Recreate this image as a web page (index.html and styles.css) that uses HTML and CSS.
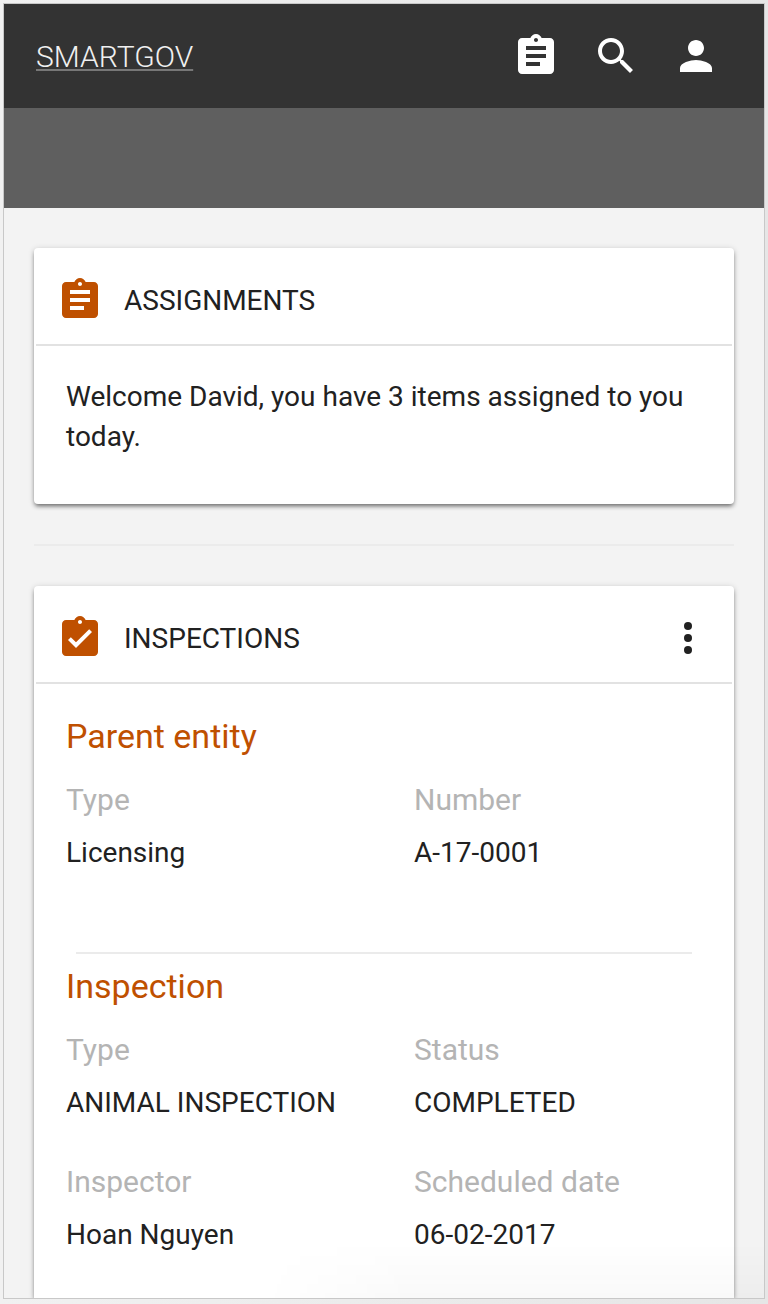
FILE: index.html
```html
<!DOCTYPE html>
<html lang="en">
<head>
<meta charset="utf-8">
<meta name="viewport" content="width=device-width, initial-scale=1">
<title>SmartGov</title>
<link rel="stylesheet" href="styles.css">
</head>
<body>
<div class="screen">
  <header class="topbar">
    <a class="brand" href="#">SMARTGOV</a>
    <nav class="actions" aria-label="Main">
      <button class="icon-button" type="button" aria-label="Assignments">
        <svg class="icon" viewBox="0 0 24 24"><path d="M19 3h-4.18C14.4 1.84 13.3 1 12 1c-1.3 0-2.4.84-2.82 2H5c-1.1 0-2 .9-2 2v14c0 1.1.9 2 2 2h14c1.1 0 2-.9 2-2V5c0-1.1-.9-2-2-2zm-7 0c.55 0 1 .45 1 1s-.45 1-1 1-1-.45-1-1 .45-1 1-1zm2 14H7v-2h7v2zm3-4H7v-2h10v2zm0-4H7V7h10v2z"/></svg>
      </button>
      <button class="icon-button" type="button" aria-label="Search">
        <svg class="icon" viewBox="0 0 24 24"><path d="M15.5 14h-.79l-.28-.27C15.41 12.59 16 11.11 16 9.5 16 5.91 13.09 3 9.5 3S3 5.91 3 9.5 5.91 16 9.5 16c1.61 0 3.09-.59 4.23-1.57l.27.28v.79l5 4.99L20.49 19l-4.99-5zm-6 0C7.01 14 5 11.99 5 9.5S7.01 5 9.5 5 14 7.01 14 9.5 11.99 14 9.5 14z"/></svg>
      </button>
      <button class="icon-button" type="button" aria-label="Account">
        <svg class="icon" viewBox="0 0 24 24"><path d="M12 12c2.21 0 4-1.79 4-4s-1.79-4-4-4-4 1.79-4 4 1.79 4 4 4zm0 2c-2.67 0-8 1.34-8 4v2h16v-2c0-2.66-5.33-4-8-4z"/></svg>
      </button>
    </nav>
  </header>
  <div class="band"></div>
  <main class="content">
    <section class="card">
      <header class="card-header">
        <svg class="icon accent" viewBox="0 0 24 24" aria-hidden="true"><path d="M19 3h-4.18C14.4 1.84 13.3 1 12 1c-1.3 0-2.4.84-2.82 2H5c-1.1 0-2 .9-2 2v14c0 1.1.9 2 2 2h14c1.1 0 2-.9 2-2V5c0-1.1-.9-2-2-2zm-7 0c.55 0 1 .45 1 1s-.45 1-1 1-1-.45-1-1 .45-1 1-1zm2 14H7v-2h7v2zm3-4H7v-2h10v2zm0-4H7V7h10v2z"/></svg>
        <h2 class="card-title">ASSIGNMENTS</h2>
      </header>
      <p class="message">Welcome David, you have 3 items assigned to you today.</p>
    </section>
    <hr class="divider">
    <section class="card card-open">
      <header class="card-header">
        <svg class="icon accent" viewBox="0 0 24 24" aria-hidden="true"><path d="M19 3h-4.18C14.4 1.84 13.3 1 12 1c-1.3 0-2.4.84-2.82 2H5c-1.1 0-2 .9-2 2v14c0 1.1.9 2 2 2h14c1.1 0 2-.9 2-2V5c0-1.1-.9-2-2-2zm-7 0c.55 0 1 .45 1 1s-.45 1-1 1-1-.45-1-1 .45-1 1-1zm-2 14l-4-4 1.41-1.41L10 14.17l6.59-6.59L18 9l-8 8z"/></svg>
        <h2 class="card-title">INSPECTIONS</h2>
        <button class="icon-button menu" type="button" aria-label="More options">
          <svg class="icon" viewBox="0 0 24 24"><circle cx="12" cy="6" r="2"/><circle cx="12" cy="12" r="2"/><circle cx="12" cy="18" r="2"/></svg>
        </button>
      </header>
      <div class="details">
        <h3 class="group-title">Parent entity</h3>
        <dl class="fields">
          <div class="field"><dt>Type</dt><dd>Licensing</dd></div>
          <div class="field"><dt>Number</dt><dd>A-17-0001</dd></div>
        </dl>
        <hr class="divider divider-inner">
        <h3 class="group-title">Inspection</h3>
        <dl class="fields">
          <div class="field"><dt>Type</dt><dd>ANIMAL INSPECTION</dd></div>
          <div class="field"><dt>Status</dt><dd>COMPLETED</dd></div>
          <div class="field"><dt>Inspector</dt><dd>Hoan Nguyen</dd></div>
          <div class="field"><dt>Scheduled date</dt><dd>06-02-2017</dd></div>
        </dl>
      </div>
    </section>
  </main>
</div>
</body>
</html>
```

FILE: styles.css
```css
* {
  box-sizing: border-box;
}

body {
  margin: 0;
  min-height: 100vh;
  padding: 3px 3px 5px;
  display: flex;
  flex-direction: column;
  background: linear-gradient(to right, #f1f1f1, #e6e6e6);
  color: #212121;
  font-family: Roboto, "Liberation Sans", sans-serif;
  font-size: 28px;
  line-height: 40px;
}

.screen {
  position: relative;
  flex: 1;
  display: flex;
  flex-direction: column;
  border: 1px solid #c8c8c8;
  background: #f3f3f3;
  overflow: hidden;
}

/* soft shade along the lower edge */
.screen::after {
  content: "";
  position: absolute;
  right: 0;
  bottom: 0;
  width: 66%;
  height: 56px;
  background: linear-gradient(to bottom, rgba(0, 0, 0, 0), rgba(0, 0, 0, 0.025));
  -webkit-mask-image: linear-gradient(to right, transparent, #000 30%);
  mask-image: linear-gradient(to right, transparent, #000 30%);
  pointer-events: none;
}

.topbar {
  display: flex;
  align-items: center;
  justify-content: space-between;
  height: 104px;
  padding: 0 44px 0 32px;
  background: #333;
}

.brand {
  padding-top: 2px;
  color: #f0f0f0;
  font-size: 30px;
  font-weight: 300;
  text-decoration: underline;
  text-decoration-color: #777;
  text-decoration-thickness: 2px;
  text-underline-offset: 2px;
}

.actions {
  display: flex;
  gap: 32px;
}

.icon-button {
  display: block;
  padding: 0;
  border: 0;
  background: none;
  color: #fff;
  cursor: pointer;
}

.icon {
  display: block;
  flex: none;
  width: 48px;
  height: 48px;
  fill: currentColor;
}

.accent {
  color: #bf5000;
}

.band {
  height: 100px;
  background: #5f5f5f;
}

.content {
  flex: 1;
  display: flex;
  flex-direction: column;
  padding: 40px 30px 0;
}

.card {
  padding: 0 2px;
  border-radius: 4px;
  background: #fff;
  box-shadow: 0 3px 4px -1px rgba(0, 0, 0, 0.5), 0 1px 6px rgba(0, 0, 0, 0.16);
}

.card-open {
  flex: 1;
  border-radius: 4px 4px 0 0;
}

.card-header {
  display: flex;
  align-items: center;
  gap: 20px;
  padding: 28px 20px 20px;
  border-bottom: 2px solid #e2e2e2;
}

.card-title {
  margin: 0;
  padding-top: 2px;
  font-size: 28px;
  font-weight: 400;
}

.menu {
  margin-left: auto;
  color: #212121;
}

.message {
  margin: 0;
  padding: 31px 30px 47px;
}

.divider {
  width: 100%;
  height: 2px;
  margin: 40px 0;
  border: 0;
  background: #ebebeb;
}

.details {
  padding: 32px 0 43px;
}

.group-title {
  margin: 0 30px 24px;
  color: #bf5000;
  font-size: 34px;
  font-weight: 400;
}

.fields {
  display: grid;
  grid-template-columns: 1fr 1fr;
  row-gap: 39px;
  margin: 0;
}

.field {
  display: flex;
  flex-direction: column;
  gap: 13px;
  padding-left: 30px;
}

.field dt {
  color: #b4b4b4;
  font-size: 30px;
}

.field dd {
  margin: 0;
}

.divider-inner {
  width: auto;
  margin: 79px 40px 12px;
}
```
